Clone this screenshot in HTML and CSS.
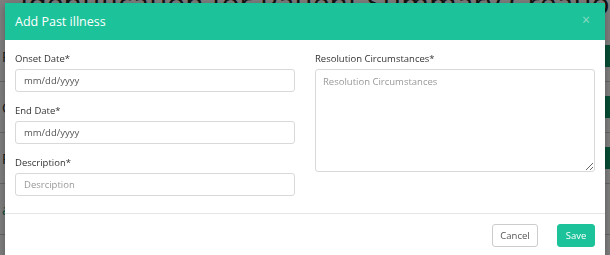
FILE: index.html
```html
<!DOCTYPE html>
<html lang="en">
<head>
  <meta charset="UTF-8">
  <meta name="viewport" content="width=device-width, initial-scale=1.0">
  <title>Add Past illness</title>
  <link rel="stylesheet" href="styles.css">
</head>
<body>

  <div class="page">
    <h1 class="page-title">Identification for Patient Summary Creation (Database/Edit)</h1>
    <div class="page-rows">
      <div class="page-row"><span class="row-text">Past illness</span><span class="row-btn"></span></div>
      <div class="page-row"><span class="row-text">Onset</span><span class="row-btn"></span></div>
      <div class="page-row"><span class="row-text">Resolution</span><span class="row-btn"></span></div>
      <div class="page-row"><span class="row-link">add</span></div>
      <div class="page-row"><span class="row-text">01</span></div>
      <div class="page-row"><span class="row-text">01</span></div>
    </div>
  </div>

  <div class="backdrop"></div>

  <div class="modal">
    <div class="modal-header">
      <span class="modal-title">Add Past illness</span>
      <span class="modal-close">&times;</span>
    </div>

    <form id="illnessForm" class="modal-body">
      <div class="col">
        <div class="field">
          <label for="onset">Onset Date*</label>
          <input type="text" id="onset" placeholder="mm/dd/yyyy" class="date-input" />
        </div>
        <div class="field">
          <label for="end">End Date*</label>
          <input type="text" id="end" placeholder="mm/dd/yyyy" class="date-input" />
        </div>
        <div class="field">
          <label for="desc">Description*</label>
          <input type="text" id="desc" placeholder="Desrciption" />
        </div>
      </div>
      <div class="col">
        <div class="field">
          <label for="resolution">Resolution Circumstances*</label>
          <textarea id="resolution" placeholder="Resolution Circumstances"></textarea>
        </div>
      </div>
    </form>

    <div class="modal-footer">
      <button type="button" class="btn btn-cancel">Cancel</button>
      <button type="submit" form="illnessForm" class="btn btn-save">Save</button>
    </div>
  </div>

</body>
</html>
```

FILE: styles.css
```css
html, body { margin: 0; height: 100%; }
body { font-family: "Open Sans", "Liberation Sans", sans-serif; color: #333; background: #fff; overflow: hidden; }

.page-title { margin: -18px 0 0 20px; font-size: 30px; font-weight: 400; color: #222; white-space: nowrap; }
.page-rows { margin-top: 8px; }
.page-row { display: flex; justify-content: space-between; align-items: center; height: 50px; border-bottom: 1px solid #ccc; padding: 0 0 0 2px; }
.row-text { font-size: 14px; color: #333; }
.row-link { font-size: 14px; color: #1aa37f; }
.row-btn { width: 20px; height: 22px; background: #0d9a6c; margin-right: -10px; }

.backdrop { position: fixed; inset: 0; background: rgba(0, 0, 0, 0.5); }

.modal { position: absolute; top: 3px; left: 5px; width: 600px; height: 280px; background: #fff; box-shadow: 0 2px 8px rgba(0,0,0,0.3); }

.modal-header { height: 37px; background: #1cc39a; display: flex; align-items: center; justify-content: space-between; padding: 0 15px 0 10px; box-sizing: border-box; }
.modal-title { color: #fff; font-size: 12.5px; }
.modal-close { color: #8fd9c2; font-size: 14px; line-height: 1; margin-top: -4px; }

.modal-body { display: grid; grid-template-columns: 280px 280px; column-gap: 20px; padding: 11px 10px 17px; border-bottom: 1px solid #e5e5e5; }
.field { margin-bottom: 11px; }
.field:last-child { margin-bottom: 0; }
label { display: block; font-size: 9.5px; line-height: 15px; margin-bottom: 3px; color: #333; }
input, textarea { display: block; width: 100%; box-sizing: border-box; border: 1px solid #d9d9d9; border-radius: 3px; font-family: "Open Sans", "Liberation Sans", sans-serif; font-size: 9.5px; color: #555; padding: 0 8px; }
input { height: 23px; }
textarea { height: 103px; padding: 5px 7px; resize: vertical; }
input::placeholder, textarea::placeholder { color: #999; }
.date-input::placeholder { color: #555; }

.modal-footer { display: flex; justify-content: flex-end; gap: 19px; padding: 10px 10px 20px; }
.btn { height: 23px; padding: 0; border-radius: 3px; font-family: "Open Sans", "Liberation Sans", sans-serif; font-size: 9.5px; cursor: pointer; }
.btn-cancel { width: 46px; background: #fff; color: #555; border: 1px solid #ccc; }
.btn-save { width: 38px; background: #1cc39a; color: #fff; border: 1px solid #1cc39a; }
```
